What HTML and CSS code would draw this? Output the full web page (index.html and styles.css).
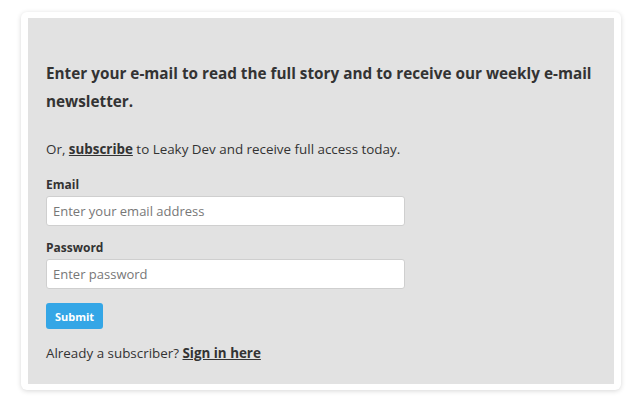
FILE: index.html
```html
<!DOCTYPE html>
<html>
<head>
<meta charset="utf-8">
<link rel="stylesheet" href="styles.css">
</head>
<body>
<div class="card">
  <div class="panel">
    <p class="lead">Enter your e-mail to read the full story and to receive our weekly e-mail newsletter.</p>
    <p class="note">Or, <a href="#">subscribe</a> to Leaky Dev and receive full access today.</p>
    <form class="form">
      <label class="label" for="email">Email</label>
      <input class="input" id="email" type="email" placeholder="Enter your email address">
      <label class="label label-gap" for="pw">Password</label>
      <input class="input" id="pw" type="password" placeholder="Enter password">
      <button class="btn" type="button">Submit</button>
    </form>
    <p class="note signin">Already a subscriber? <a href="#">Sign in here</a></p>
  </div>
</div>
</body>
</html>
```
FILE: styles.css
```css
html, body {
  margin: 0;
  padding: 0;
  background: #ffffff;
}
body {
  font-family: "Open Sans", "Liberation Sans", sans-serif;
  color: #333333;
  padding: 12px 19px 14px 21px;
}
.card {
  width: 600px;
  box-sizing: border-box;
  background: #ffffff;
  border-radius: 6px;
  padding: 6px 7px 6px 7px;
  box-shadow: 0 1px 5px rgba(0,0,0,0.16);
}
.panel {
  background: #e2e2e2;
  padding: 41px 18px 21px 18px;
}
.lead {
  margin: 0;
  font-size: 15.3px;
  font-weight: 700;
  line-height: 28px;
  color: #333333;
}
.note {
  margin: 24px 0 0 0;
  font-size: 13.4px;
  line-height: 20px;
  color: #333333;
}
.note a {
  color: #333333;
  font-weight: 700;
  text-decoration: underline;
}
.form {
  display: flex;
  flex-direction: column;
  align-items: flex-start;
  margin-top: 18px;
}
.label {
  font-size: 12px;
  font-weight: 700;
  line-height: 16px;
  color: #333333;
}
.label-gap {
  margin-top: 14px;
}
.input {
  margin-top: 3px;
  width: 359px;
  height: 30px;
  box-sizing: border-box;
  border: 1px solid #cfcfcf;
  border-radius: 3px;
  background: #ffffff;
  padding: 0 6px;
  font-family: "Open Sans", "Liberation Sans", sans-serif;
  font-size: 13px;
  color: #333;
  outline: none;
}
.input::placeholder {
  color: #777777;
}
.btn {
  margin-top: 14px;
  width: 57px;
  height: 26px;
  border: none;
  border-radius: 3px;
  background: #34a6e6;
  color: #ffffff;
  font-family: "Open Sans", "Liberation Sans", sans-serif;
  font-size: 11px;
  font-weight: 700;
  padding: 0;
}
.signin {
  margin-top: 14px;
}
```
